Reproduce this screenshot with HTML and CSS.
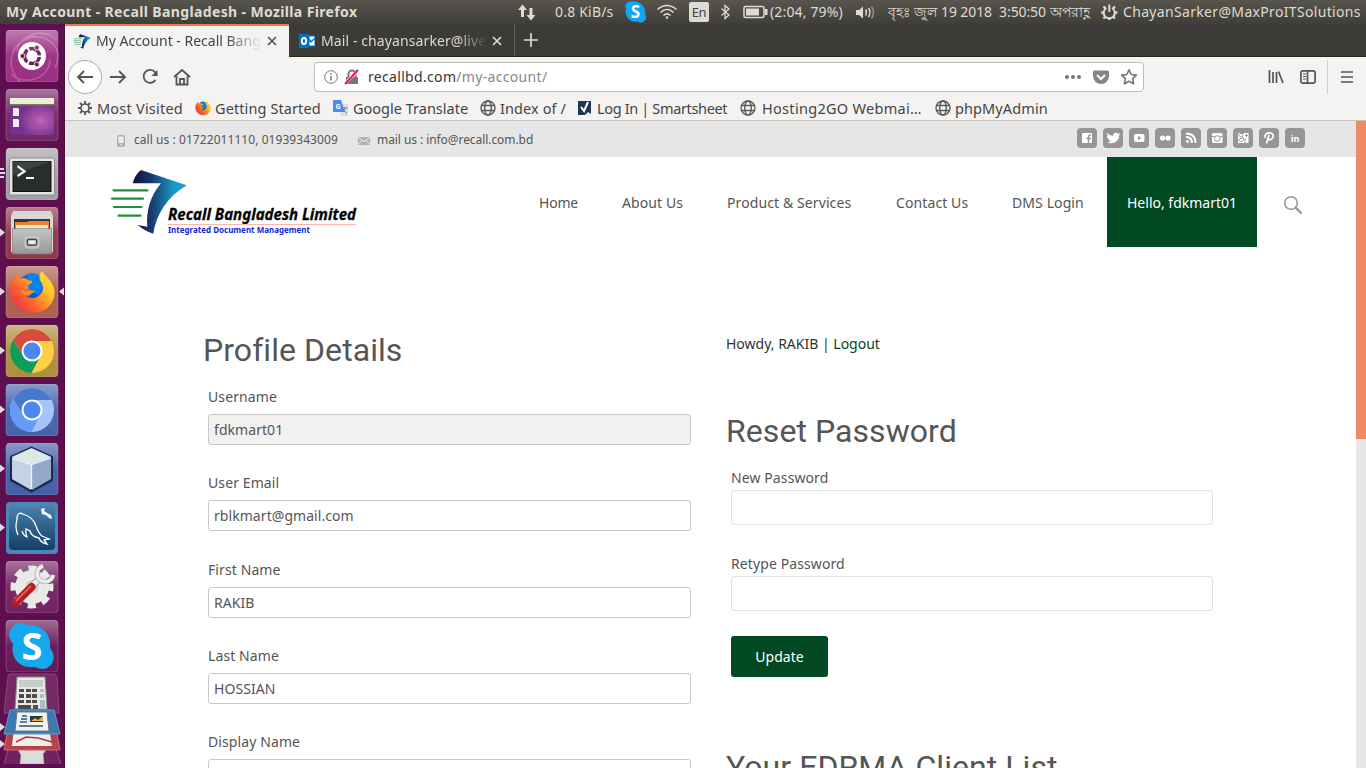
FILE: index.html
```html
<!DOCTYPE html>
<html lang="en">
<head>
<meta charset="utf-8">
<title>My Account - Recall Bangladesh</title>
<link rel="stylesheet" href="styles.css">
</head>
<body>
<svg class="defs" aria-hidden="true">
  <defs>
    <linearGradient id="gloss" x1="0" y1="0" x2="0" y2="1"><stop offset="0" stop-color="#fff" stop-opacity=".38"/><stop offset=".5" stop-color="#fff" stop-opacity=".05"/><stop offset="1" stop-color="#fff" stop-opacity=".02"/></linearGradient>
    <linearGradient id="silver" x1="0" y1="0" x2="0" y2="1"><stop offset="0" stop-color="#c4c4c4"/><stop offset="1" stop-color="#989898"/></linearGradient>
    <radialGradient id="desk" cx=".7" cy=".6"><stop offset="0" stop-color="#c264b6"/><stop offset="1" stop-color="#74328e"/></radialGradient>
    <linearGradient id="fox" x1="1" y1="0" x2="0" y2=".8"><stop offset="0" stop-color="#fff04a"/><stop offset=".35" stop-color="#ffc02a"/><stop offset=".65" stop-color="#ff6a2b"/><stop offset="1" stop-color="#f02c50"/></linearGradient>
    <linearGradient id="bird" x1="0" y1="0" x2="1" y2="0"><stop offset="0" stop-color="#150d44"/><stop offset=".35" stop-color="#173a70"/><stop offset=".75" stop-color="#1997c4"/><stop offset="1" stop-color="#1aa0cf"/></linearGradient>
    <linearGradient id="sea" x1="0" y1="0" x2="0" y2="1"><stop offset="0" stop-color="#4a80ae"/><stop offset="1" stop-color="#133e68"/></linearGradient>
    <symbol id="globe" viewBox="0 0 16 16"><g fill="none" stroke="#5b5b5b" stroke-width="1.4"><circle cx="8" cy="8" r="7"/><ellipse cx="8" cy="8" rx="3.3" ry="7"/><path d="M1.5 5.5h13M1.5 10.500h13"/></g></symbol>
    <symbol id="firefox" viewBox="0 0 46 46"><circle cx="23" cy="21" r="16" fill="#0a5fd0"/><path d="M18 5c8-3 15 1 17 9l-5 12-12-5z" fill="#0a84e8"/><path d="M3 11l3-2c0-2 0-3 1-5l4 6c3-2 6-1 8 1l4 1c1 3-4 3-4 5l1 3-5 2c0 6 8 9 13 6 7-4 7-11 4-15-3-5-1-9 1-11 2 4 6 6 9 11 7 10 3 23-7 28-12 6-26 2-32-10C-1 23 1 16 3 11z" fill="url(#fox)"/><path d="M12 21c2 1 5 1 8 0l6 1c-1 2-4 2-5 4-4 2-8-1-9-5z" fill="#ff8a2a"/></symbol>
    <symbol id="brand" viewBox="0 0 79 70"><path d="M33 5 78.7 20.3C59 32 48 50 45.3 68.7 40 67 34 64 29.7 60l9.6 1.7C38 47 42 31 53 18.3H24.7C26 13 29 8 33 5Z" fill="url(#bird)"/><path d="M5.500 25.300h34M4 33.700h31M6 42h27.500M10.500 50.700h22" stroke="#1f8f3a" stroke-width="2.200" stroke-linecap="round"/></symbol>
  </defs>
</svg>

<header class="panel">
  <span class="panel-title">My Account - Recall Bangladesh - Mozilla Firefox</span>
  <svg width="20" height="24" viewBox="0 0 20 24" fill="#dfdbd2"><path d="M5.500 4.500 10 10H7v7H4v-7H1zM14 20.500 18.500 15h-3V8h-3v7h-3z"/></svg>
  <span class="panel-speed">0.8 KiB/s</span>
  <svg width="24" height="24" viewBox="0 0 24 24"><path d="M6 1.500h3a11 11 0 0 1 11 13 5 5 0 0 1-7 7A10 10 0 0 1 1 9 5 5 0 0 1 6 1.500Z" fill="#12a5f4"/><text x="10.500" y="18" class="skype-s" font-size="17">S</text></svg>
  <svg width="24" height="24" viewBox="0 0 24 24" fill="none" stroke="#dfdbd2" stroke-width="1.600"><path d="M.5 9.500c6-5 13-5 19 0M3.500 12.500c4-4 9-4 13 0M6.500 15.500c2.500-2.300 4.500-2.300 7 0"/><circle cx="10" cy="17.500" r="1.200" fill="#dfdbd2" stroke="none"/></svg>
  <span class="lang">En</span>
  <svg width="12" height="24" viewBox="0 0 12 24" fill="none" stroke="#dfdbd2" stroke-width="1.300"><path d="M.5 8.500 8 15l-4 3.500v-13L8 9 .5 15.500"/></svg>
  <svg width="26" height="24" viewBox="0 0 26 24"><rect x="1" y="6.500" width="20" height="11" rx="1.500" fill="none" stroke="#dfdbd2" stroke-width="1.500"/><path d="M3 8.500h13v7H3zM22 9h2.500v6H22z" fill="#dfdbd2"/></svg>
  <span class="panel-battery">(2:04, 79%)</span>
  <svg width="22" height="24" viewBox="0 0 22 24"><path d="M0 10h3l4-3.500v12L3 15H0z" fill="#dfdbd2"/><g fill="none" stroke="#dfdbd2" stroke-width="1.500"><path d="M9.500 9.500q2 3 0 6M12.500 8q3 4.500 0 9"/><path opacity=".5" d="M15.500 6.500q4 6 0 12"/></g></svg>
  <span class="panel-date"><span class="day">বৃহঃ জুল</span><span class="clock">19 2018&nbsp; 3:50:50</span><span class="period">অপরাহ্ণ</span></span>
  <svg width="20" height="24" viewBox="0 0 20 24" fill="none" stroke="#dfdbd2"><path d="M5.500 8a5.500 5.500 0 1 0 5.500 0M8.300 4.500v7.500" stroke-width="1.900"/><path d="M8.300 17.500V20M3 12.500H.2M13.500 12.500h2.800M4.500 8.500 2.500 6.500M12 8.500l2-2M4.500 16.500l-2 2M12 16.500l2 2" stroke-width="2.400"/></svg>
  <span class="panel-user">ChayanSarker@MaxProITSolutions</span>
</header>

<div class="desktop">
  <nav class="launcher">
    <svg viewBox="0 0 65 52"><rect x="6" width="52" height="52" rx="4" fill="#9a2b7f"/><path d="M20 52C3 33 12 10 36 6M57 10C43-3 20 5 17 20M55 38C67 12 38 1 25 10M11 44c12 12 39 6 39-15" fill="none" stroke="#c774b4" stroke-width="1.500" opacity=".6"/><circle cx="32" cy="26" r="14" fill="#fff"/><circle cx="32" cy="26" r="7.500" fill="none" stroke="#68154f" stroke-width="3.500" stroke-dasharray="13.700 2" stroke-dashoffset="-1"/><circle cx="22.500" cy="26" r="2.500" fill="#68154f" stroke="#fff" stroke-width=".8"/><circle cx="36.800" cy="17.600" r="2.500" fill="#68154f" stroke="#fff" stroke-width=".8"/><circle cx="36.800" cy="34.400" r="2.500" fill="#68154f" stroke="#fff" stroke-width=".8"/><rect class="shine" x="6" width="52" height="52" rx="4"/></svg>
    <svg viewBox="0 0 65 52"><rect x="6" width="52" height="52" rx="4" fill="#702460"/><rect class="shine" x="6" width="52" height="52" rx="4"/><rect x="10" y="10" width="44" height="36" rx="1" fill="url(#desk)"/><path d="M10 9h44v6H10z" fill="#efecdc"/><path d="M10 15h44v1.500H10z" fill="#798047"/><path d="M13 19h5l1 1v7h-6zM13 30h5l1 1v7h-6z" fill="#f2eef2"/></svg>
    <svg viewBox="0 0 65 52"><rect x="6" width="52" height="52" rx="4" fill="#a19ca5"/><rect class="shine" x="6" width="52" height="52" rx="4"/><rect x="9.500" y="10" width="45" height="37" rx="1.500" fill="#e5e6e3" stroke="#8b8b8b"/><rect x="13" y="13.500" width="38" height="30" fill="#292d2d" stroke="#0e1010"/><path d="M13 13h38L13 27z" fill="#fff" opacity=".1"/><path d="m17.500 18 7 5.500-7 4.500M26 30h8" fill="none" stroke="#fff" stroke-width="2.200"/><path d="M0 20h4v2H0zM0 24h5v2H0zM0 28h4v2H0z" class="mark"/></svg>
    <svg viewBox="0 0 65 52"><rect x="6" width="52" height="52" rx="4" fill="#8c3548"/><rect class="shine" x="6" width="52" height="52" rx="4"/><path d="M13 4h38l2 5v36H11V9z" fill="#d8d8d6"/><path d="M14 12h36v12H14z" fill="#343434"/><path d="M15 21v-6h12l2-1h20v7z" fill="#ef802c"/><path d="M16 18h32v4H16z" fill="#f7e9d7"/><path d="M12.500 21.500h39V47h-39z" fill="url(#silver)" stroke="#777" stroke-width=".6"/><rect x="25" y="30" width="14" height="11" rx="2.500" fill="#bbb" stroke="#ccc"/><rect x="27.500" y="32.500" width="9" height="5.500" rx="1" fill="#eee" stroke="#444" stroke-width="1.400"/><path class="mark" d="m0 21.500 5 4-5 4z"/></svg>
    <svg viewBox="0 0 65 52"><rect x="6" width="52" height="52" rx="4" fill="#aa5d4e"/><rect class="shine" x="6" width="52" height="52" rx="4"/><use href="#firefox" x="9" y="3" width="46" height="46"/><path class="mark" d="m0 21.500 5 4-5 4zM64 21.500l-5 4 5 4z"/></svg>
    <svg viewBox="0 0 65 52"><rect x="6" width="52" height="52" rx="4" fill="#ae8c3c"/><rect class="shine" x="6" width="52" height="52" rx="4"/><circle cx="32" cy="26" r="22" fill="#ffce43"/><path d="M13 15a22 22 0 0 1 38.600 1H32a10 10 0 0 0-8.600 15z" fill="#d84b40"/><path d="M13 15a22 22 0 0 0 18.500 33l9-17a10 10 0 0 1-17 0z" fill="#109d58"/><circle cx="32" cy="26" r="9.500" fill="#4a89f4" stroke="#fff" stroke-width="2"/><path class="mark" d="m0 21.500 5 4-5 4z"/></svg>
    <svg viewBox="0 0 65 52"><rect x="6" width="52" height="52" rx="4" fill="#4261a8"/><rect class="shine" x="6" width="52" height="52" rx="4"/><circle cx="32" cy="26" r="22" fill="#a5c4fa"/><path d="M13 15a22 22 0 0 1 38.600 1H32a10 10 0 0 0-8.600 15z" fill="#4778cc"/><path d="M13 15a22 22 0 0 0 18.500 33l9-17a10 10 0 0 1-17 0z" fill="#659af8"/><circle cx="32" cy="26" r="9.500" fill="#4a89f4" stroke="#fff" stroke-width="2"/><path class="mark" d="m0 21.500 5 4-5 4z"/></svg>
    <svg viewBox="0 0 65 52"><rect x="6" width="52" height="52" rx="4" fill="#405da6"/><rect class="shine" x="6" width="52" height="52" rx="4"/><path d="m31.500 5 20 9v23l-20 11-20-11V14z" fill="#aebfd9" stroke="#1d2852" stroke-width="3" stroke-linejoin="round"/><path d="m31.500 5 20 9-20 7-20-7z" fill="#dce9e7"/><path d="m12 15 19 6v26L12 36z" fill="#c3d2e8"/><path d="m32 21 19-6v21L32 47z" fill="#93a8cb"/><path d="m12 15 19.500 6.500L51 15M31.500 21v25" fill="none" stroke="#f0f6ff" stroke-width="1.300"/><path class="mark" d="m0 21.500 5 4-5 4z"/></svg>
    <svg viewBox="0 0 65 52"><rect x="6" width="52" height="52" rx="4" fill="#4c87bb"/><rect x="9" y="4" width="46" height="44" rx="4" fill="url(#sea)"/><path d="M18 33c-3-7-2-11-1-16 0-5 2-7 6-5 7 2 11 6 13 12 2 5 3 8 6 10l7 3-5 1 3 4c-5-1-7-3-8-6-5-1-8-3-9-7l-4-2c-1 3 0 5 1 8-3-1-4-3-5-6" fill="none" stroke="#fff" stroke-width="1.300"/><path d="m41 7 4-1-1 3 3 2 4 2 1 4-3-1-3-3-4-1z" fill="#fff"/><path class="mark" d="m0 21.500 5 4-5 4z"/></svg>
    <svg viewBox="0 0 65 52"><rect x="6" width="52" height="52" rx="4" fill="#70205f"/><rect class="shine" x="6" width="52" height="52" rx="4"/><circle cx="32" cy="26" r="18.500" fill="none" stroke="#e9e9e7" stroke-width="6" stroke-dasharray="8 6.530" stroke-dashoffset="4"/><circle cx="32" cy="26" r="17" fill="#e9e9e7"/><circle cx="32" cy="26" r="8" fill="#d5d5d3" stroke="#fff"/><path d="m33 24 7-7" stroke="#aaa" stroke-width="7"/><path d="m33 24 8-8" stroke="#eee" stroke-width="5"/><path d="M43 5a8 8 0 1 0 10 9" fill="none" stroke="#aaa" stroke-width="5"/><path d="M43 5a8 8 0 1 0 10 9" fill="none" stroke="#eee" stroke-width="3.500"/><path d="m15.500 42 16-16" stroke="#b31e23" stroke-width="8" stroke-linecap="round"/><path d="m16 40 15-15" stroke="#ee5654" stroke-width="2"/></svg>
    <svg viewBox="0 0 65 52"><rect x="6" width="52" height="52" rx="4" fill="#651454"/><rect class="shine" x="6" width="52" height="52" rx="4"/><path d="M21 3a13 13 0 0 1 7 2c14-1 24 10 22 23 8 10 2 20-7 21-3 0-5-1-8-2C20 49 10 38 13 24 6 15 9 5 21 3Z" fill="#16a8ec"/><text x="32" y="39.500" class="skype-s" font-size="38">S</text></svg>
    <svg class="folded" viewBox="0 0 65 94"><path d="M10 4h44q2 0 3 3l2 36H4L8 7q0-3 2-3z" fill="#732962" stroke="#8d5782" stroke-width=".8"/><path d="M17 7h28l2 32H15z" fill="#e8e8e5" stroke="#888"/><path d="M19 10h24v7H19z" fill="#c7cec7"/><path d="M19 19h5v3h-5zm7 0h5v3h-5zm6 0h5v3h-5zM19 24h5v4h-5zm7 0h5v4h-5zm6 0h5v4h-5zM18 30h6v3h-6zm8 0h5v3h-5zm6 0h5v3h-5zM18 35h13v4H18zm15 0h5v4h-5z" fill="#4b4b4b"/><path d="M40 19h4v3h-4zm0 5h4v4h-4zm0 6h5v8h-5z" fill="#aebcc8"/><path d="M8 79h48l5 16H4z" fill="#6d2460" stroke="#90537f"/><path d="M18 80h28l-3 4 1 10H20l1-9z" fill="#ddd" stroke="#aaa" stroke-dasharray="2 1"/><path d="M8 58h48l4 22H4z" fill="#b74249" stroke="#d66b70"/><path d="M14 58h35l3 18H12z" fill="#eee"/><path d="m16 72 10-5 12 1 14 4" fill="none" stroke="#c32f38" stroke-width="1.500"/><path d="M10 40h44l6 24H4z" fill="#3b79b1" stroke="#699acb"/><path d="M17 42h30l2 19H15z" fill="#f2f4f4" stroke="#777"/><path d="M22 46h5M21 49h6M20 52h7M19 56h24" stroke="#28577f" stroke-width="1.500"/><path d="M30 46h13v6H30z" fill="#253a4b"/><path d="m31 51 4-3 3 2 5-4v5z" fill="#f1ad3e"/><path class="mark" d="m0 53 5 4-5 4zM0 70l5 4-5 4z"/></svg>
  </nav>

  <main class="browser">
    <div class="tabs">
      <div class="tab tab-active"><svg width="18" height="16" viewBox="0 0 79 70"><use href="#brand" width="79" height="70"/></svg><span class="tab-text">My Account - Recall Bang</span><svg width="12" height="12" viewBox="0 0 12 12"><path d="m2 2 8 8M10 2l-8 8" stroke="#555" stroke-width="1.700"/></svg></div>
      <div class="tab tab-other"><svg width="16" height="14" viewBox="0 0 16 14"><path d="M0 0h10v14H0z" fill="#0072c6"/><path d="M10 2h6v10h-6z" fill="#fff" stroke="#0072c6"/><path d="m10 5 2 3 4-4" fill="none" stroke="#0072c6" stroke-width="1.400"/><ellipse cx="5" cy="7" rx="2.200" ry="3" fill="none" stroke="#fff" stroke-width="1.800"/></svg><span class="tab-text">Mail - chayansarker@live</span><svg width="12" height="12" viewBox="0 0 12 12"><path d="m2 2 8 8M10 2l-8 8" stroke="#dedad2" stroke-width="1.700"/></svg></div>
      <svg class="new-tab" width="16" height="16" viewBox="0 0 16 16"><path d="M8 1v14M1 8h14" stroke="#dedad2" stroke-width="1.700"/></svg>
    </div>
    <div class="toolbar">
      <span class="back"><svg width="18" height="18" viewBox="0 0 18 18" class="line"><path d="M17 9H2M8 3 2 9l6 6"/></svg></span>
      <svg width="18" height="18" viewBox="0 0 18 18" class="line"><path d="M1 9h15M10 3l6 6-6 6"/></svg>
      <svg width="18" height="18" viewBox="0 0 18 18" class="line reload"><path d="M14.500 12A6.500 6.500 0 1 1 14 4l2 3"/><path d="M16.500 2v6h-6z" fill="#555" stroke="none"/></svg>
      <svg width="18" height="18" viewBox="0 0 18 18" class="line home"><path d="m1 9 8-7 8 7M3.500 8v8.500h11V8"/><path d="M7 16v-5h4v5" /></svg>
      <div class="address">
        <svg width="14" height="14" viewBox="0 0 14 14" fill="none" stroke="#777"><circle cx="7" cy="7" r="6.300"/><path d="M7 6v4.500M7 3.300v1.400" stroke-width="1.500"/></svg>
        <svg class="lock" width="16" height="16" viewBox="0 0 16 16"><path d="M2 8h12v7H2z" fill="#777"/><path d="M4.500 8V5a3.500 3.500 0 0 1 7 0v3" fill="none" stroke="#777" stroke-width="2"/><path d="m1 14.500 13-13" stroke="#fff" stroke-width="3"/><path d="m1 15 13-14" stroke="#f20d4b" stroke-width="1.900"/></svg>
        <span class="url">recallbd.com<span class="path">/my-account/</span></span>
        <svg class="dots" width="18" height="6" viewBox="0 0 18 6" fill="#777"><circle cx="3" cy="3" r="2"/><circle cx="9" cy="3" r="2"/><circle cx="15" cy="3" r="2"/></svg>
        <svg class="pocket" width="16" height="16" viewBox="0 0 16 16"><path d="M1.500 1.500h13q1.500 0 1.500 1.500v4a8 8 0 0 1-16 0V3q0-1.500 1.500-1.500z" fill="#858585"/><path d="m4 6 4 4 4-4" fill="none" stroke="#fff" stroke-width="2"/></svg>
        <svg class="star" width="18" height="18" viewBox="0 0 18 18"><path d="m9 1.800 2.200 4.700 5.200.6-3.800 3.500 1 5.200L9 13.200l-4.600 2.600 1-5.200-3.800-3.500 5.200-.6z" fill="none" stroke="#777" stroke-width="1.600" stroke-linejoin="round"/></svg>
      </div>
      <svg class="library" width="16" height="16" viewBox="0 0 16 16" stroke="#555" stroke-width="1.700"><path d="M1.500 1v13M5 3v11M8.500 3v11M10.500 2.500 15 14"/></svg>
      <svg class="sidebar-icon" width="16" height="14" viewBox="0 0 16 14" fill="none" stroke="#555" stroke-width="1.700"><rect x=".9" y=".9" width="14.200" height="12.200" rx="2"/><path d="M7.500 1v12"/><path d="M3 4h3M3 6.500h3M3 9h3" stroke-width="1"/></svg>
      <span class="rule"></span>
      <svg width="12" height="12" viewBox="0 0 12 12" stroke="#555" stroke-width="1.700"><path d="M0 1h12M0 6h12M0 11h12"/></svg>
    </div>
    <div class="bookmarks">
      <span class="b1"><svg width="14" height="14" viewBox="0 0 14 14" fill="none" stroke="#555"><circle cx="7" cy="7" r="4" stroke-width="1.600"/><path d="M7 0v3M7 11v3M0 7h3M11 7h3M2 2l2 2M10 10l2 2M2 12l2-2M10 4l2-2" stroke-width="1.800"/></svg>Most Visited</span>
      <span class="b2"><svg width="16" height="16"><use href="#firefox" width="16" height="16"/></svg>Getting Started</span>
      <span class="b3"><svg width="16" height="16" viewBox="0 0 16 16"><path d="M5 4h10v12H8z" fill="#ddd"/><path d="M0 0h8l4 12H1q-1 0-1-1z" fill="#4b8bf4"/><text x="5" y="8.500" class="g-letter">G</text><path d="M9 8h6m-3-1v1c0 2-1 3-2 4m0-3c1 2 2 3 4 4" fill="none" stroke="#718b9b"/></svg>Google Translate</span>
      <span class="b4"><svg width="16" height="16"><use href="#globe"/></svg>Index of /</span>
      <span class="b5"><svg width="14" height="16" viewBox="0 0 14 16"><path d="M0 1h13v13l-3-2-3 3H0z" fill="#1d3656"/><path d="m3 7 3 4 4-9" stroke="#fff" stroke-width="2" fill="none"/></svg>Log In | Smartsheet</span>
      <span class="b6"><svg width="16" height="16"><use href="#globe"/></svg>Hosting2GO Webmai…</span>
      <span class="b7"><svg width="16" height="16"><use href="#globe"/></svg>phpMyAdmin</span>
    </div>

    <div class="viewport">
      <div class="site">
        <div class="contact-bar">
          <svg width="8" height="12" viewBox="0 0 8 12"><rect x=".7" y=".7" width="6.600" height="10.600" rx="1" fill="#eee" stroke="#b0b0b0" stroke-width="1.400"/><path d="M1 8h6v3H1z" fill="#b0b0b0"/><circle cx="4" cy="9.700" r=".7" fill="#fff"/></svg>
          <span class="phone">call us : 01722011110, 01939343009</span>
          <svg class="mail-icon" width="12" height="8" viewBox="0 0 12 8"><path d="M0 0h12v8H0z" fill="#b0b0b0"/><path d="m0 .5 6 4 6-4M0 7.500l4-4M12 7.500l-4-4" fill="none" stroke="#eee"/></svg>
          <span class="mail">mail us : info@recall.com.bd</span>
          <div class="social">
            <svg viewBox="0 0 20 20"><rect x="5" y="5" width="10" height="10" rx="1" fill="#fff"/><path d="M11.500 15v-6q0-2 2.500-2M9.500 10.500H14" class="cut"/></svg>
            <svg viewBox="0 0 20 20"><path d="M4 5q3 3 6 3c0-4 4-4 5-2l2-1-1 3c0 6-7 9-12 6 2 0 3 0 4-1-2 0-2-1-3-2h1C4 10 4 9 4 8h1C4 7 4 6 4 5z" fill="#fff"/></svg>
            <svg viewBox="0 0 20 20"><rect x="5" y="6" width="10.500" height="8" rx="2" fill="#fff"/><path d="m9 8 3.500 2L9 12z" fill="#969696"/></svg>
            <svg viewBox="0 0 20 20" fill="#fff"><circle cx="7.500" cy="10" r="2.600"/><circle cx="13" cy="10" r="2.600"/></svg>
            <svg viewBox="0 0 20 20"><circle cx="6.500" cy="13.500" r="1.500" fill="#fff"/><path d="M5 9q6 0 6 6M5 5.500q9.500 0 9.500 9.500" fill="none" stroke="#fff" stroke-width="2"/></svg>
            <svg viewBox="0 0 20 20"><rect x="5" y="5" width="10.500" height="10" rx="1.500" fill="#fff"/><circle cx="10.200" cy="10.500" r="2.800" class="cut thin"/><path d="M5 8.500h2.500m5.500 0h2.500" class="cut thin"/></svg>
            <svg viewBox="0 0 20 20"><path d="M5 5h10.500v10H5z" fill="#fff"/><path d="M10.500 5.500H8c-3 0-2 3.500 0 3.500s2-2.500 1-3M9 9c3 2 1 4.500-1 4.500s-3-1.500-1-3h2M12 7.500h3M13.500 6v3M12 10v5" class="cut thin"/></svg>
            <svg viewBox="0 0 20 20"><path d="M6.500 10C4 5 13 3 14 7s-4 6-5 3.500M10 7 7.500 15.500" fill="none" stroke="#fff" stroke-width="1.700"/></svg>
            <svg viewBox="0 0 20 20"><text x="10" y="13.500" class="in-letter">in</text></svg>
          </div>
        </div>
        <div class="site-header">
          <svg class="logo" width="252" height="75" viewBox="0 0 252 75"><use href="#brand" width="79" height="70"/><text x="60" y="55" textLength="188" lengthAdjust="spacingAndGlyphs" class="logo-name">Recall Bangladesh Limited</text><path d="M60 59.500h188" stroke="#ffb4b4"/><text x="60" y="67.500" textLength="142" lengthAdjust="spacingAndGlyphs" class="logo-tag">Integrated Document Management</text></svg>
          <nav class="menu"><a class="m1">Home</a><a class="m2">About Us</a><a class="m3">Product &amp; Services</a><a class="m4">Contact Us</a><a class="m5">DMS Login</a></nav>
          <a class="hello">Hello, fdkmart01</a>
          <svg class="search" width="20" height="20" viewBox="0 0 20 20" fill="none" stroke="#969696"><circle cx="8" cy="8" r="6.300" stroke-width="1.600"/><path d="m12.500 12.500 6 6" stroke-width="2.300"/></svg>
        </div>
        <div class="content">
          <form class="profile">
            <h2>Profile Details</h2>
            <div class="field"><label>Username</label><div class="input disabled">fdkmart01</div></div>
            <div class="field"><label>User Email</label><div class="input">rblkmart@gmail.com</div></div>
            <div class="field"><label>First Name</label><div class="input">RAKIB</div></div>
            <div class="field"><label>Last Name</label><div class="input">HOSSIAN</div></div>
            <div class="field"><label>Display Name</label><div class="input"></div></div>
          </form>
          <section class="account">
            <p class="howdy">Howdy, RAKIB | <a>Logout</a></p>
            <h2>Reset Password</h2>
            <div class="secret"><label>New Password</label><div class="input"></div></div>
            <div class="secret"><label>Retype Password</label><div class="input"></div></div>
            <div class="update">Update</div>
            <h2 class="clients">Your EDRMA Client List</h2>
          </section>
        </div>
      </div>
      <div class="scrollbar"><div class="thumb"></div></div>
    </div>
  </main>
</div>
</body>
</html>
```
FILE: styles.css
```css
* { box-sizing: border-box; }
body { margin: 0; width: 1366px; height: 768px; overflow: hidden; font: 14px/20px "Noto Sans", "Open Sans", sans-serif; color: #555; white-space: nowrap; }
svg { display: block; flex: none; }
.defs { position: absolute; width: 0; height: 0; }
h2, p { margin: 0; }

.panel { height: 24px; display: grid; grid-template-columns: 517px 38px 70px 32px 32px 32px 22px 27px 86px 32px 213px 22px 243px; align-items: center; background: linear-gradient(#57554d, #403e39); color: #dfdbd2; }
.panel-title { padding-left: 6px; font-weight: bold; letter-spacing: .37px; }
.panel-speed { letter-spacing: .2px; }
.panel-user { letter-spacing: .33px; }
.panel-battery { letter-spacing: .15px; }
.panel-date { display: flex; }
.day { width: 53px; }
.clock { width: 109px; letter-spacing: -.1px; }
.period { letter-spacing: -.5px; }
.lang { width: 20px; height: 20px; border-radius: 2px; background: #dfdbd2; color: #45433e; text-align: center; font-size: 13px; letter-spacing: -.5px; }
.skype-s { fill: #fff; font-family: "Noto Sans", sans-serif; font-weight: bold; text-anchor: middle; }

.desktop { height: 744px; display: flex; }
.launcher { width: 65px; padding-top: 6px; display: flex; flex-direction: column; gap: 7px; overflow: hidden; background: #5f0e50; border-right: 1px solid #491038; }
.launcher svg { width: 65px; height: 52px; }
.launcher .folded { height: 94px; margin-top: -9px; }
.shine { fill: url(#gloss); stroke: #fff; stroke-opacity: .2; }
.mark { fill: #dedade; }

.browser { width: 1301px; display: flex; flex-direction: column; background: #f4f3f2; }
.tabs { height: 33px; display: flex; background: #3c3b37; border-bottom: 1px solid #262622; }
.tab { display: flex; align-items: center; }
.tab-active { width: 224px; height: 33px; padding: 0 0 2px 8px; border-top: 2px solid #ed764d; background: #f4f3f2; color: #444; }
.tab-active .tab-text { width: 166px; margin-left: 5px; margin-right: 4px; mask-image: linear-gradient(90deg, #000 78%, transparent); }
.tab-other { width: 226px; padding: 1px 0 0 10px; color: #dfdbd2; border-right: 1px solid #65645f; }
.tab-other .tab-text { width: 166px; margin-left: 6px; margin-right: 4px; mask-image: linear-gradient(90deg, #000 83%, transparent); letter-spacing: .1px; }
.new-tab { margin: 8px 0 0 8px; }

.toolbar { height: 39px; display: flex; align-items: center; padding-left: 3px; }
.back { width: 34px; height: 34px; margin-right: 7px; display: grid; place-items: center; border: 1px solid #aaa; border-radius: 50%; background: #fff; }
.line { fill: none; stroke: #555; stroke-width: 1.8; }
.reload { margin-left: 14px; }
.home { margin-left: 14px; }
.address { width: 830px; height: 30px; margin-left: 123px; padding-left: 9px; display: flex; align-items: center; border: 1px solid #bcbab8; border-radius: 4px; background: #fff; color: #333; }
.lock { margin-left: 6px; }
.url { width: 696px; margin-left: 8px; padding-top: 1px; letter-spacing: .32px; }
.path { color: #888; }
.pocket { margin-left: 11px; }
.star { margin-left: 11px; }
.library { margin-left: 124px; }
.sidebar-icon { margin-left: 16px; }
.rule { width: 1px; height: 34px; margin: 0 13px 0 11px; background: #d2d0ce; }
.sidebar-icon + .rule { margin-left: 11px; }

.bookmarks { height: 25px; display: flex; align-items: center; padding-left: 13px; border-bottom: 1px solid #c9c3be; color: #444; font-size: 14.5px; }
.bookmarks span { height: 24px; display: flex; align-items: center; gap: 4px; }
.bookmarks .b1 { width: 117px; gap: 5px; letter-spacing: .22px; }
.bookmarks .b2 { width: 138px; letter-spacing: .1px; }
.bookmarks .b3 { width: 147px; }
.bookmarks .b4 { width: 98px; letter-spacing: .1px; }
.bookmarks .b5 { width: 162px; gap: 5px; letter-spacing: -.35px; }
.bookmarks .b6 { width: 195px; gap: 6px; letter-spacing: .3px; }
.bookmarks .b7 { letter-spacing: .1px; }
.g-letter { fill: #fff; font: bold 7px "Noto Sans"; text-anchor: middle; }

.viewport { height: 647px; display: flex; overflow: hidden; }
.site { width: 1291px; background: #fff; }
.scrollbar { width: 10px; background: #e9e7e5; }
.thumb { height: 318px; background: #f08a64; }
.contact-bar { height: 36px; display: flex; align-items: center; padding-left: 52px; background: #e6e6e6; font-size: 12px; }
.contact-bar > svg { margin-top: 4px; }
.phone { width: 224px; margin-left: 9px; padding-top: 1px; letter-spacing: .06px; }
.mail { width: 700px; margin-left: 7px; padding-top: 1px; letter-spacing: -.07px; }
.social { display: flex; gap: 6px; }
.social svg { width: 20px; height: 20px; margin-top: -2px; border-radius: 4px; background: #969696; }
.cut { fill: none; stroke: #969696; stroke-width: 1.4; }
.thin { stroke-width: 1; }
.in-letter { fill: #fff; font: bold 9px "Noto Sans"; text-anchor: middle; }

.site-header { height: 90px; display: flex; align-items: flex-start; }
.logo { margin: 8px 0 0 43px; }
.logo-name { font: italic bold 16px "Noto Sans"; fill: #050505; stroke: #050505; stroke-width: .3px; }
.logo-tag { font: bold 9px "Noto Sans"; fill: #1228d1; }
.menu { width: 568px; display: flex; margin: 36px 0 0 179px; letter-spacing: .1px; }
.m1 { width: 83px; letter-spacing: -.2px; }
.m2 { width: 105px; }
.m3 { width: 169px; }
.m4 { width: 116px; }
.hello { width: 150px; height: 90px; padding: 36px 20px; background: #004923; color: #fff; }
.search { margin: 38px 0 0 26px; }

.content { display: flex; letter-spacing: .06px; }
.profile { width: 523px; padding: 83px 0 0 138px; }
h2 { height: 40px; color: #555; font: 32px/40px Roboto, sans-serif; }
.field { width: 483px; height: 58px; margin: 17px 0 28.33px 5px; }
.field + .field { margin-top: 0; }
label { display: block; height: 20px; letter-spacing: .1px; }
.input { border: 1px solid #c8c8c8; border-radius: 3px; }
.field .input { height: 31px; margin-top: 7px; padding: 5px; line-height: 20px; }
.disabled { background: #f2f1f0; }
.account { padding: 87px 0 0 138px; }
.howdy { height: 20px; margin-bottom: 57px; color: #333; letter-spacing: 0; }
.howdy a { color: #004923; }
.secret { width: 482px; height: 57px; margin: 17px 0 29px 5px; }
.secret + .secret { margin-top: 0; margin-bottom: 25px; }
.secret .input { height: 35px; margin-top: 2px; border-color: #e1e1e1; }
.update { width: 97px; height: 41px; margin-left: 5px; border-radius: 3px; background: #004923; color: #fff; text-align: center; line-height: 41px; }
.clients { margin-top: 70px; }
```
